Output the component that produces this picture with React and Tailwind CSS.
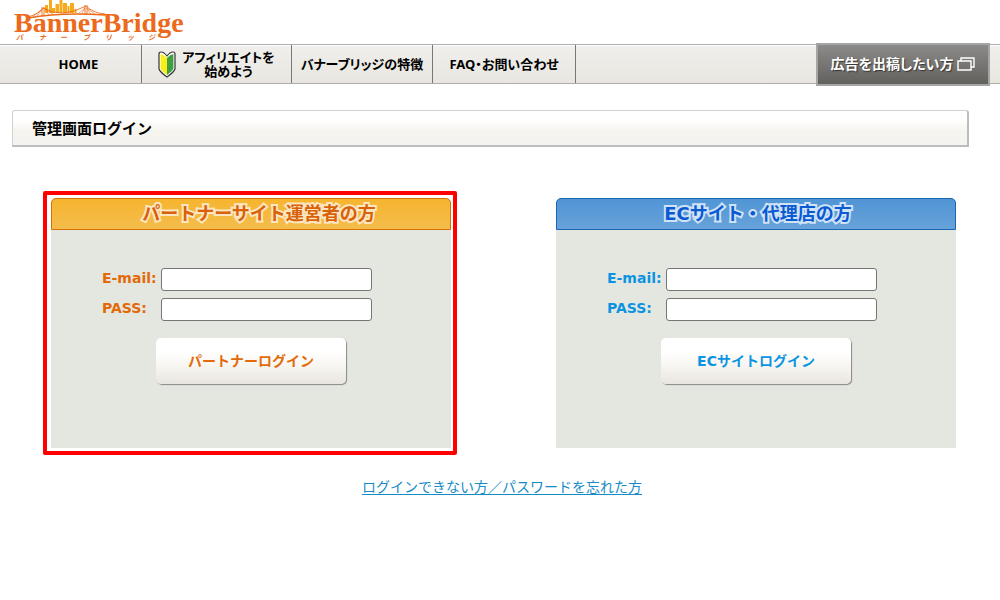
import { useId } from "react";

const themes = {
    partner: {
        header: "border-[#d67205] from-[#f6b52f] to-[#f4bc4a] pl-4 text-[#d8610a] [-webkit-text-stroke:4px_#fbe6c0]",
        text: "text-[#e26a08]",
    },
    ec: {
        header: "border-[#1767b3] from-[#5095d5] to-[#68a2d9] pl-1 text-[#0a5ad2] [-webkit-text-stroke:4px_#cfe2f6]",
        text: "text-[#0c94e2]",
    },
};

export default function App() {
    return (
        <div className="min-h-screen bg-white text-black font-['Noto_Sans','Noto_Sans_CJK_JP',sans-serif]">
            <header>
                <div className="h-11 pl-3.5">
                    <Logo />
                </div>
                <NavBar />
            </header>
            <main className="pt-[26px]">
                <h1 className="ml-3 mr-[31px] flex h-[37px] items-center rounded-t-[3px] border border-r-2 border-b-2 border-[#d2d2d2] border-r-[#bdbdbd] border-b-[#bdbdbd] bg-linear-to-b from-white from-25% via-[#f6f4ee] via-60% to-[#f3f3f1] pl-[19px] text-[15px] font-bold font-['Noto_Sans_CJK_JP',sans-serif]">
                    管理画面ログイン
                </h1>
                <div className="mt-11 ml-[43px] mr-11 flex items-center gap-[99px]">
                    <div className="flex-1 rounded-[2px] border-4 border-[#ff0000] py-[3px] pl-1 pr-0.5">
                        <LoginPanel title="パートナーサイト運営者の方" button="パートナーログイン" theme={themes.partner} />
                    </div>
                    <div className="flex-1">
                        <LoginPanel title="ECサイト・代理店の方" button="ECサイトログイン" theme={themes.ec} />
                    </div>
                </div>
                <p className="mt-[21px] pl-1 text-center text-[14px] leading-5 font-['Noto_Sans_CJK_JP',sans-serif]">
                    <a href="#" className="text-[#168bc6] underline underline-offset-2">ログインできない方／パスワードを忘れた方</a>
                </p>
            </main>
        </div>
    );
}

function Logo() {
    return (
        <a href="#" className="block w-[170px] text-[#ec6a1c]">
            <svg viewBox="0 0 170 44" className="block h-11 w-[170px]" role="img" aria-label="BannerBridge">
                <path
                    d="M31 13V5h3v8zM35 13V0h3v13zM38 13V8h3v5zM41.500 13V4h3.500v9zM45.500 13V0h3v13zM49 13V3h4v10zM53.500 13V6h2v7zM56 13V3h4v10zM60.500 13V9h2v4z"
                    fill="#f6ab1d"
                />
                <g fill="none" stroke="#ec6a1c">
                    <path d="M14 18Q48 12 91 15" strokeWidth="1.6" />
                    <path d="M14 17Q25 14 29 8Q48 19 72 6Q79 13 91 14" strokeWidth="0.9" />
                    <path d="M28 7v9M30 7v9M71 5v10M73 5v10" strokeWidth="0.9" />
                    <path d="M19 17l9-8M23 16l5-6M31 9l4 6M31 9l8 5M71 8l-7 6M71 8l-4 7M73 8l4 7M73 8l9 7" strokeWidth="0.6" />
                </g>
                <text x="0" y="32" fill="currentColor" fontSize="28" fontWeight="700" fontFamily="Liberation Serif, serif">BannerBridge</text>
                <text x="2 25 46 69 91 113 134" y="40" fill="currentColor" fontSize="7" fontWeight="700" fontStyle="italic" fontFamily="Noto Sans CJK JP, sans-serif">バナーブリッジ</text>
            </svg>
        </a>
    );
}

function NavBar() {
    return (
        <nav className="flex h-10 items-center border-y border-[#adadad] bg-linear-to-b from-[#f0efed] to-[#e8e6df] pr-2.5 text-[13px] leading-3.5 font-bold [font-feature-settings:'palt'] inset-shadow-[0_1px_0_#ffffff]">
            <NavItem className="w-[142px] pl-4">HOME</NavItem>
            <NavItem className="w-[150px] gap-1.5">
                <BeginnerMark />
                <span className="text-center">アフィリエイトを<br />始めよう</span>
            </NavItem>
            <NavItem className="w-[141px]">バナーブリッジの特徴</NavItem>
            <NavItem className="w-[143px]">FAQ・お問い合わせ</NavItem>
            <a
                href="#"
                className="relative ml-auto flex h-[43px] w-[174px] shrink-0 items-center justify-center gap-1 border-2 border-[#a5a5a5] bg-linear-to-b from-[#8c8b89] to-[#62615e] text-[14px] text-white text-shadow-[1px_1px_1px_#333333]"
            >
                広告を出稿したい方
                <WindowsIcon />
            </a>
        </nav>
    );
}

function NavItem({ className, children }) {
    return (
        <a href="#" className={`flex h-full shrink-0 items-center justify-center border-r border-[#777777] whitespace-nowrap ${className}`}>
            {children}
        </a>
    );
}

function BeginnerMark() {
    return (
        <svg viewBox="0 0 18 27" className="h-[27px] w-[18px]" aria-hidden="true">
            <path d="M1 3Q1 1 3 1Q6 1 9 5Q12 1 15 1Q17 1 17 3V18Q16 21 9 26Q2 21 1 18Z" fill="#fff" stroke="#333" strokeWidth="1.2" strokeLinejoin="round" />
            <path d="M2.600 3Q6 3.500 9 7V24Q3.500 20 2.600 17.500Z" fill="#f9ee1a" />
            <path d="M15.400 3Q12 3.500 9 7V24Q14.500 20 15.400 17.500Z" fill="#3f9f41" />
        </svg>
    );
}

function WindowsIcon() {
    return (
        <svg viewBox="0 0 18 14" className="h-3.5 w-[18px]" fill="none" stroke="#fff" strokeWidth="1.4" aria-hidden="true">
            <path d="M4 4V1h13v9h-3" />
            <path d="M1 4h13v9H1z" />
        </svg>
    );
}

function LoginPanel({ title, button, theme }) {
    const id = useId();

    return (
        <section className="min-h-[250px] rounded-t-[5px] bg-[#e4e7e0] font-['DejaVu_Sans','Noto_Sans_CJK_JP',sans-serif]">
            <h2 className={`flex h-8 items-center justify-center rounded-t-[5px] border bg-linear-to-b text-[18px] leading-none font-bold [paint-order:stroke_fill] ${theme.header}`}>
                {title}
            </h2>
            <form className="pt-[38px]" onSubmit={(e) => e.preventDefault()}>
                <div className={`flex flex-col gap-[7px] pl-[51px] pr-[79px] text-[14px] leading-5 font-bold ${theme.text}`}>
                    <div className="flex">
                        <label htmlFor={`${id}-email`} className="w-[59px] shrink-0">E-mail:</label>
                        <input id={`${id}-email`} type="email" className="h-[23px] min-w-0 flex-1 rounded-[3px] border border-[#767676] bg-white px-1 text-sm font-normal text-black" />
                    </div>
                    <div className="flex">
                        <label htmlFor={`${id}-pass`} className="w-[59px] shrink-0">PASS:</label>
                        <input id={`${id}-pass`} type="password" className="h-[23px] min-w-0 flex-1 rounded-[3px] border border-[#767676] bg-white px-1 text-sm font-normal text-black" />
                    </div>
                </div>
                <button
                    type="submit"
                    className={`mx-auto mt-[17px] block h-[46px] w-[190px] rounded-[5px] bg-linear-to-b from-white from-30% via-[#f6f4ee] via-65% to-[#e9e6e0] text-[14px] font-bold shadow-[1px_1px_1px_#888888] ${theme.text}`}
                >
                    {button}
                </button>
            </form>
        </section>
    );
}
